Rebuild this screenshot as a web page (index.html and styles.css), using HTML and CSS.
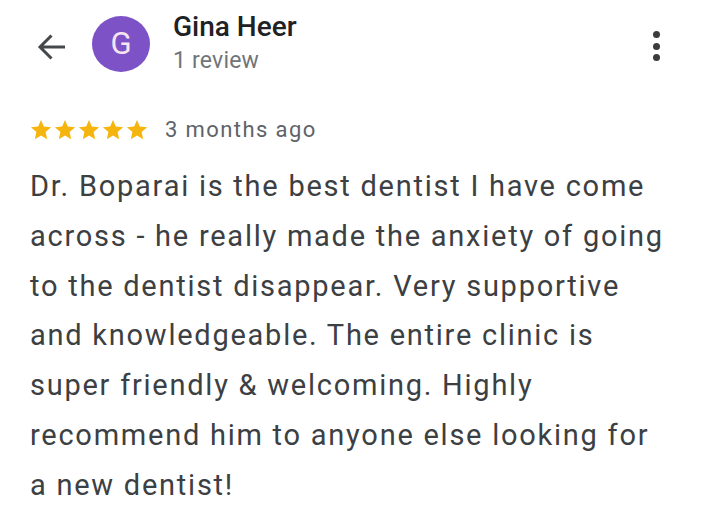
FILE: index.html
```html
<!DOCTYPE html>
<html>
<head>
<meta charset="utf-8">
<link rel="stylesheet" href="styles.css">
</head>
<body>
<div class="page">
  <header class="top">
    <button class="back" aria-label="Back">
      <svg width="30" height="28" viewBox="0 0 30 28"><path d="M29 14H4.5M15.5 2.5L4 14l11.5 11.5" fill="none" stroke="#45484b" stroke-width="3"/></svg>
    </button>
    <div class="avatar">G</div>
    <div class="who">
      <div class="name">Gina Heer</div>
      <div class="count">1 review</div>
    </div>
    <div class="more"><span></span><span></span><span></span></div>
  </header>
  <div class="meta">
    <div class="stars">
      <svg viewBox="0 0 24 24"><path d="M12 1l3.1 7.3 7.9.7-6 5.2 1.8 7.8L12 17.9 5.2 22l1.8-7.8-6-5.2 7.9-.7z"/></svg>
      <svg viewBox="0 0 24 24"><path d="M12 1l3.1 7.3 7.9.7-6 5.2 1.8 7.8L12 17.9 5.2 22l1.8-7.8-6-5.2 7.9-.7z"/></svg>
      <svg viewBox="0 0 24 24"><path d="M12 1l3.1 7.3 7.9.7-6 5.2 1.8 7.8L12 17.9 5.2 22l1.8-7.8-6-5.2 7.9-.7z"/></svg>
      <svg viewBox="0 0 24 24"><path d="M12 1l3.1 7.3 7.9.7-6 5.2 1.8 7.8L12 17.9 5.2 22l1.8-7.8-6-5.2 7.9-.7z"/></svg>
      <svg viewBox="0 0 24 24"><path d="M12 1l3.1 7.3 7.9.7-6 5.2 1.8 7.8L12 17.9 5.2 22l1.8-7.8-6-5.2 7.9-.7z"/></svg>
    </div>
    <span class="ago">3 months ago</span>
  </div>
  <p class="text">Dr. Boparai is the best dentist I have come<br>across - he really made the anxiety of going<br>to the dentist disappear. Very supportive<br>and knowledgeable. The entire clinic is<br>super friendly &amp; welcoming. Highly<br>recommend him to anyone else looking for<br>a new dentist!</p>
</div>
</body>
</html>
```
FILE: styles.css
```css
html, body { margin: 0; padding: 0; background: #fff; }
body { font-family: Roboto, "Noto Sans", sans-serif; width: 706px; height: 513px; overflow: hidden; }
.page { padding: 0 30px; }
.top { display: flex; align-items: center; height: 90px; }
.back { border: 0; background: none; padding: 0; margin: 3px 0 0 6px; width: 30px; height: 28px; display: flex; }
.avatar { width: 58px; height: 56px; border-radius: 50%; background: #7c52c6; color: #f7e4f2; font-size: 31px; display: flex; align-items: center; justify-content: center; margin-left: 26px; margin-top: -3px; }
.who { margin-left: 23px; flex: 1; margin-top: -3px; }
.name { font-size: 28px; font-weight: 500; color: #202124; line-height: 34px; letter-spacing: 0; }
.count { font-size: 23px; color: #70757a; line-height: 32px; letter-spacing: 0.2px; margin-top: 1px; }
.more { display: flex; flex-direction: column; gap: 4.5px; margin-right: 16px; margin-top: 2px; }
.more span { width: 7px; height: 7px; border-radius: 50%; background: #3c3c3c; }
.meta { display: flex; align-items: center; margin-top: 27px; }
.stars { display: flex; gap: 2px; }
.stars svg { width: 22px; height: 22px; fill: #f6b40e; }
.ago { margin-left: 17px; font-size: 22px; color: #5f6368; letter-spacing: 1.4px; }
.text { margin: 20px 0 0; font-size: 29px; line-height: 49.8px; color: #3c4043; letter-spacing: 1.75px; }
```
